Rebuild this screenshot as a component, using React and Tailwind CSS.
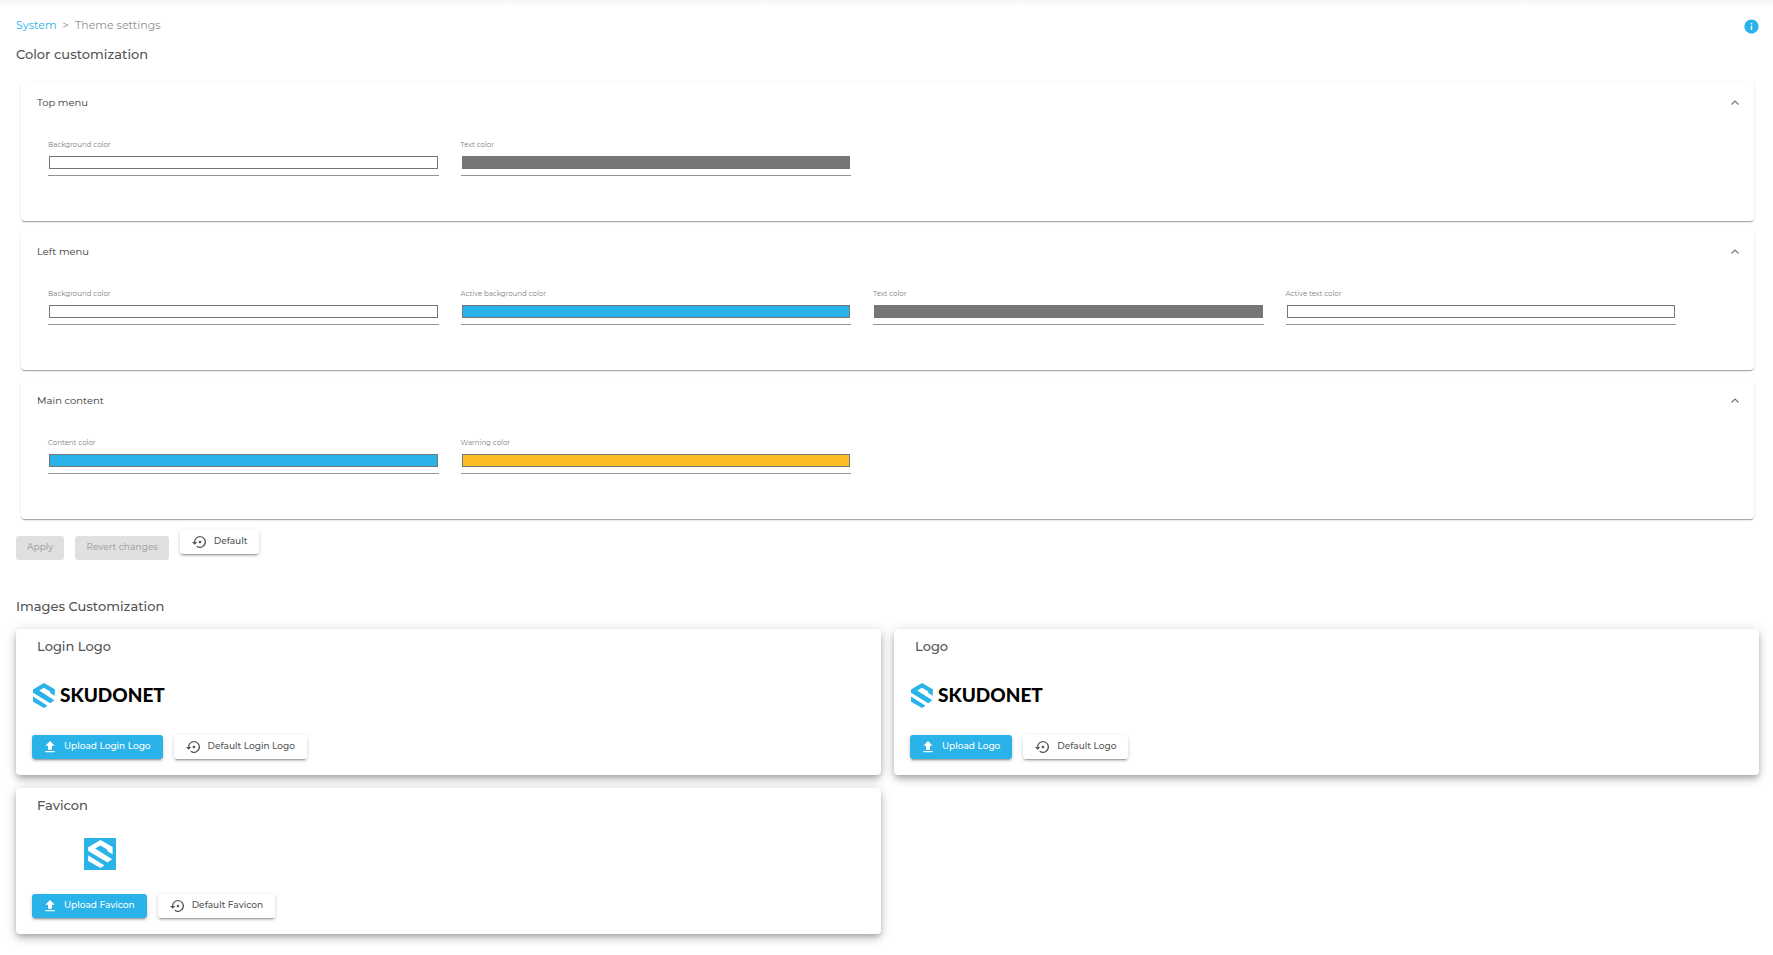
import { useState } from "react";
import { MdFileUpload, MdInfo, MdSettingsBackupRestore } from "react-icons/md";

const sections = [
  {
    title: "Top menu",
    fields: [
      { id: "top-bg", label: "Background color", value: "#ffffff" },
      { id: "top-text", label: "Text color", value: "#767679" },
    ],
  },
  {
    title: "Left menu",
    fields: [
      { id: "left-bg", label: "Background color", value: "#ffffff" },
      { id: "left-active-bg", label: "Active background color", value: "#29b3e8" },
      { id: "left-text", label: "Text color", value: "#767679" },
      { id: "left-active-text", label: "Active text color", value: "#ffffff" },
    ],
  },
  {
    title: "Main content",
    fields: [
      { id: "content", label: "Content color", value: "#29b3e8" },
      { id: "warning", label: "Warning color", value: "#fbbd23" },
    ],
  },
];

// brand mark, takes the current text color
function Mark({ className }) {
  return (
    <svg viewBox="0 0 22 25" className={className} fill="currentColor" aria-hidden="true">
      <path d="M0 6.5 11 0l10.8 6.3v6.5L17.2 10V8.6L11 4.8 6.2 7.5 21.3 17.2 17.3 20.2 0 9.8z" />
      <path d="M0 13.6 14.5 22.8 11 25 0 18.8z" />
    </svg>
  );
}

function SkudonetLogo() {
  return (
    <div className="flex items-center gap-[5px] w-[136px]">
      <Mark className="w-[22px] h-[25px] ml-px text-[#29b3e8] shrink-0" />
      <span className="font-['Lato',sans-serif] text-[19px] leading-6 font-black text-black">SKUDONET</span>
    </div>
  );
}

function FaviconImage() {
  return (
    <div className="w-[136px] flex justify-center">
      <div className="size-8 bg-[#29b3e8] flex items-center justify-center">
        <Mark className="w-[25px] h-7 text-white" />
      </div>
    </div>
  );
}

function ColorField({ id, label, value }) {
  const [color, setColor] = useState(value);

  return (
    <div className="border-b border-[#949494] h-[35px]">
      <label htmlFor={id} className="block text-[7px] leading-2 text-[#808080]">
        {label}
      </label>
      <input
        id={id}
        type="color"
        value={color}
        onChange={(e) => setColor(e.target.value)}
        className="block appearance-none w-full h-[13px] mt-[7px] px-px [&::-webkit-color-swatch-wrapper]:p-0 [&::-webkit-color-swatch]:border [&::-webkit-color-swatch]:border-[#767679] [&::-webkit-color-swatch]:rounded-none"
      />
    </div>
  );
}

function Section({ title, fields }) {
  const [open, setOpen] = useState(true);

  return (
    <section className="rounded-sm shadow-[0_2px_1px_-1px_rgba(0,0,0,0.2),0_1px_1px_rgba(0,0,0,0.14),0_1px_3px_rgba(0,0,0,0.12)]">
      <button
        type="button"
        aria-expanded={open}
        onClick={() => setOpen(!open)}
        className="flex w-full items-center justify-between pl-4 pr-[15px] h-10 text-[10px] text-[#333]"
      >
        <span>{title}</span>
        <svg viewBox="0 0 8 5" className="w-2 h-[5px]" fill="none" stroke="#777" strokeWidth="1.2" aria-hidden="true">
          <path d="M0.5 4.5 4 1l3.5 3.5" />
        </svg>
      </button>
      {open && (
        <div className="grid grid-cols-4 gap-x-[22px] pl-[27px] pr-[78px] pt-[19px] pb-[45px]">
          {fields.map((f) => (
            <ColorField key={f.id} {...f} />
          ))}
        </div>
      )}
    </section>
  );
}

const raised = "shadow-[0_3px_1px_-2px_rgba(0,0,0,0.2),0_2px_2px_rgba(0,0,0,0.14),0_1px_5px_rgba(0,0,0,0.12)]";

function DefaultButton({ children }) {
  return (
    <button type="button" className={`flex items-center gap-[6px] h-6 px-3 rounded-[3px] text-[9px] font-medium text-[#555] ${raised}`}>
      <MdSettingsBackupRestore className="size-4" />
      <span className="pb-0.5">{children}</span>
    </button>
  );
}

function UploadButton({ children }) {
  return (
    <button type="button" className={`flex items-center gap-[6px] h-6 pl-[10px] pr-3 rounded-[3px] text-[9px] font-medium text-white bg-[#29b3e8] ${raised}`}>
      <MdFileUpload className="size-4" />
      <span className="pb-0.5">{children}</span>
    </button>
  );
}

function ImageCard({ name, image }) {
  return (
    <section className="rounded-sm h-[146px] px-4 pt-[9px] shadow-[0_3px_5px_-1px_rgba(0,0,0,0.2),0_5px_8px_rgba(0,0,0,0.14),0_1px_14px_rgba(0,0,0,0.12)] bg-white">
      <h3 className="px-[5px] text-[13px] leading-4 font-medium text-[#555]">{name}</h3>
      <div className="flex items-center h-10 mt-[21px] mb-5">{image}</div>
      <div className="flex gap-[11px]">
        <UploadButton>Upload {name}</UploadButton>
        <DefaultButton>Default {name}</DefaultButton>
      </div>
    </section>
  );
}

export default function App() {
  return (
    <div className="min-h-screen font-['Montserrat','Inter',sans-serif] text-[#555]">
      {/* shadow cast by the top bar */}
      <div className="h-2 bg-linear-to-b from-[#f7f7f7] to-white" />

      <main className="pl-4 pr-[13px]">
        <div className="flex items-center justify-between pt-[9px]">
          <nav className="flex gap-[6px] pb-0.5 text-[11px] leading-4 text-[#909090]">
            <a href="#" className="text-[#29b3e8]">System</a>
            <span>&gt;</span>
            <span>Theme settings</span>
          </nav>
          <button type="button" aria-label="Help">
            <MdInfo className="size-[17px] text-[#29b3e8]" />
          </button>
        </div>

        <h2 className="mt-[11px] text-[13px] leading-4 font-medium text-[#555]">Color customization</h2>

        <div className="mt-5 ml-[5px] mr-[6px] flex flex-col gap-[10px]">
          {sections.map((s) => (
            <Section key={s.title} {...s} />
          ))}
        </div>

        <div className="flex items-start gap-[11px] mt-[11px]">
          <button type="button" disabled className="mt-[6px] h-6 px-[11px] pb-0.5 rounded-[3px] bg-[#e0e0e0] text-[9px] font-medium text-[#a6a6a6]">
            Apply
          </button>
          <button type="button" disabled className="mt-[6px] h-6 px-[11px] pb-0.5 rounded-[3px] bg-[#e0e0e0] text-[9px] font-medium text-[#a6a6a6]">
            Revert changes
          </button>
          <DefaultButton>Default</DefaultButton>
        </div>

        <h2 className="mt-[38px] text-[13px] leading-4 font-medium text-[#555]">Images Customization</h2>

        <div className="grid grid-cols-2 gap-[13px] mt-[15px] pr-px pb-5">
          <ImageCard name="Login Logo" image={<SkudonetLogo />} />
          <ImageCard name="Logo" image={<SkudonetLogo />} />
          <ImageCard name="Favicon" image={<FaviconImage />} />
        </div>
      </main>
    </div>
  );
}
